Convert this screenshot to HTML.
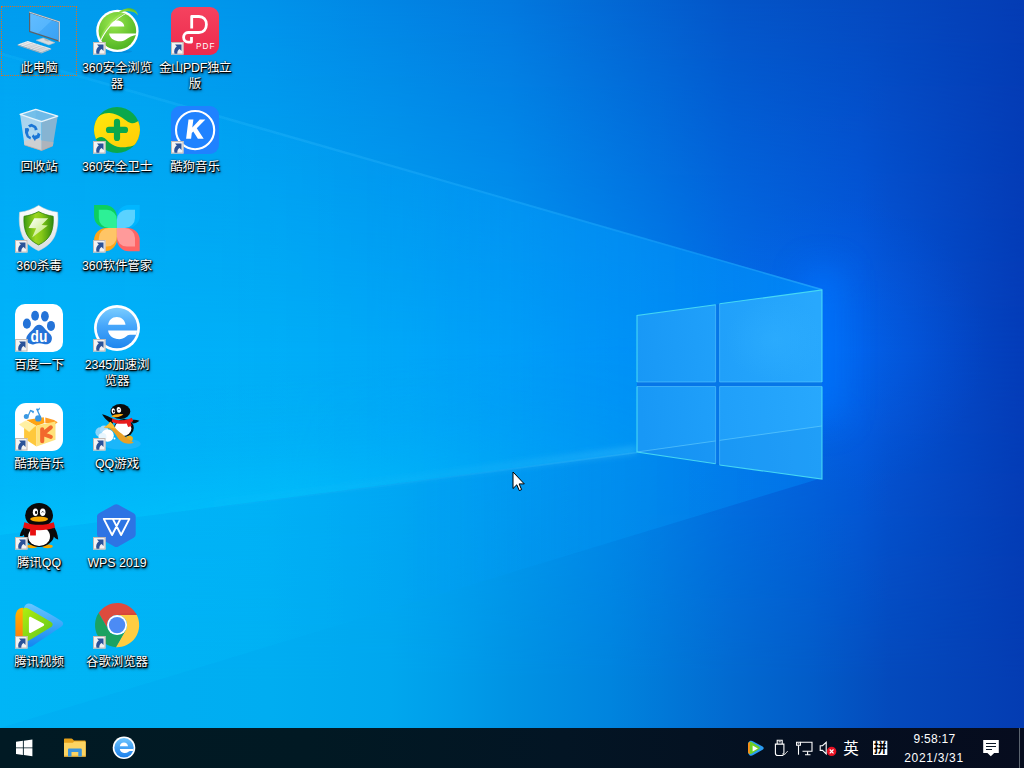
<!DOCTYPE html>
<html lang="zh-CN">
<head>
<meta charset="utf-8">
<title>Desktop</title>
<style>
html,body{margin:0;padding:0;width:1024px;height:768px;overflow:hidden;background:#0078d7;}
body{position:relative;font-family:"Liberation Sans","Noto Sans CJK SC",sans-serif;}
#bg{position:absolute;left:0;top:0;width:1024px;height:768px;display:block;}
.ico{position:absolute;width:76px;height:90px;}
.ico svg.im{position:absolute;left:14px;top:0;width:48px;height:48px;overflow:visible;}
.ico .lb{position:absolute;left:-4px;top:53px;width:84px;text-align:center;color:#fff;font-size:12.400px;line-height:16px;text-shadow:1px 1px 0 rgba(0,0,0,.55),1px 1px 1px rgba(0,0,0,.95),0 1px 2px rgba(0,0,0,.9),1px 2px 3px rgba(0,0,0,.7),0 0 2px rgba(0,0,0,.6);}
.ico svg.sc{position:absolute;left:14.200px;top:35.300px;width:12.500px;height:12.500px;}
#sel{position:absolute;left:1px;top:6px;width:76px;height:70px;border:1px dotted #e0701c;box-sizing:border-box;}
#tb{position:absolute;left:0;top:728px;width:1024px;height:40px;background:linear-gradient(90deg,#011a24 0%,#011923 30%,#031524 55%,#050f20 80%,#060c1e 100%);}
#tb .t{position:absolute;color:#fff;font-size:12px;white-space:nowrap;}
#tb svg{position:absolute;overflow:visible;}
</style>
</head>
<body>
<svg id="bg" viewBox="0 0 1024 768">
<defs>
<linearGradient id="gt" gradientUnits="userSpaceOnUse" x1="0" y1="0" x2="1024" y2="0"><stop offset="0.0000" stop-color="rgb(0,156,238)"/><stop offset="0.1514" stop-color="rgb(0,154,236)"/><stop offset="0.2637" stop-color="rgb(0,146,234)"/><stop offset="0.4980" stop-color="rgb(2,120,222)"/><stop offset="0.7129" stop-color="rgb(3,85,200)"/><stop offset="0.8691" stop-color="rgb(4,72,190)"/><stop offset="1.0000" stop-color="rgb(4,60,180)"/></linearGradient>
<linearGradient id="gm" gradientUnits="userSpaceOnUse" x1="0" y1="0" x2="1024" y2="0"><stop offset="0.0000" stop-color="rgb(0,178,250)"/><stop offset="0.2637" stop-color="rgb(0,174,247)"/><stop offset="0.3809" stop-color="rgb(0,168,247)"/><stop offset="0.4980" stop-color="rgb(0,156,246)"/><stop offset="0.6250" stop-color="rgb(0,132,240)"/><stop offset="0.7129" stop-color="rgb(2,112,235)"/><stop offset="0.8398" stop-color="rgb(3,92,228)"/><stop offset="0.8691" stop-color="rgb(4,84,216)"/><stop offset="0.9707" stop-color="rgb(4,65,190)"/><stop offset="1.0000" stop-color="rgb(4,60,185)"/></linearGradient>
<linearGradient id="gbt" gradientUnits="userSpaceOnUse" x1="0" y1="0" x2="1024" y2="0"><stop offset="0.0000" stop-color="rgb(0,176,244)"/><stop offset="0.2637" stop-color="rgb(0,173,241)"/><stop offset="0.3809" stop-color="rgb(0,167,238)"/><stop offset="0.4395" stop-color="rgb(0,158,234)"/><stop offset="0.4980" stop-color="rgb(0,147,228)"/><stop offset="0.5957" stop-color="rgb(0,132,222)"/><stop offset="0.7129" stop-color="rgb(2,106,208)"/><stop offset="0.7910" stop-color="rgb(2,92,200)"/><stop offset="0.8691" stop-color="rgb(4,74,188)"/><stop offset="1.0000" stop-color="rgb(4,60,178)"/></linearGradient>

<linearGradient id="mt" gradientUnits="userSpaceOnUse" x1="0" y1="0" x2="0" y2="350"><stop offset="0" stop-color="#fff"/><stop offset="1" stop-color="#000"/></linearGradient>
<linearGradient id="mb" gradientUnits="userSpaceOnUse" x1="0" y1="350" x2="0" y2="680"><stop offset="0" stop-color="#000"/><stop offset="1" stop-color="#fff"/></linearGradient>
<mask id="mkt" maskUnits="userSpaceOnUse" x="0" y="0" width="1024" height="768"><rect width="1024" height="768" fill="url(#mt)"/></mask>
<mask id="mkb" maskUnits="userSpaceOnUse" x="0" y="0" width="1024" height="768"><rect width="1024" height="768" fill="url(#mb)"/></mask>
<filter id="bl16" x="-150%" y="-50%" width="400%" height="200%"><feGaussianBlur stdDeviation="17"/></filter>
<filter id="bl8" x="-20%" y="-20%" width="140%" height="140%"><feGaussianBlur stdDeviation="8"/></filter>
<filter id="bl3" x="-20%" y="-20%" width="140%" height="140%"><feGaussianBlur stdDeviation="3"/></filter>
<filter id="bl1" x="-20%" y="-20%" width="140%" height="140%"><feGaussianBlur stdDeviation="0.5"/></filter>
<linearGradient id="lnA" gradientUnits="userSpaceOnUse" x1="0" y1="0" x2="822" y2="0"><stop offset="0" stop-color="#40c8ff" stop-opacity="0.080"/><stop offset="0.400" stop-color="#40c0ff" stop-opacity="0.220"/><stop offset="0.850" stop-color="#40c0ff" stop-opacity="0.200"/><stop offset="1" stop-color="#60d8ff" stop-opacity="0.300"/></linearGradient>
<linearGradient id="bmA" gradientUnits="userSpaceOnUse" x1="0" y1="0" x2="822" y2="0"><stop offset="0" stop-color="#00c8ff" stop-opacity="0.12"/><stop offset="0.25" stop-color="#00c0ff" stop-opacity="0.1"/><stop offset="0.45" stop-color="#00a8ff" stop-opacity="0.14"/><stop offset="0.75" stop-color="#00a0ff" stop-opacity="0.46"/><stop offset="1" stop-color="#0098ff" stop-opacity="0.6"/></linearGradient>
<linearGradient id="bmB" gradientUnits="userSpaceOnUse" x1="0" y1="0" x2="822" y2="0"><stop offset="0" stop-color="#00d0ff" stop-opacity="0.16"/><stop offset="0.3" stop-color="#00c8ff" stop-opacity="0.16"/><stop offset="0.5" stop-color="#00a0f6" stop-opacity="0.16"/><stop offset="0.75" stop-color="#0098f6" stop-opacity="0.4"/><stop offset="1" stop-color="#0088fa" stop-opacity="0.45"/></linearGradient>
<linearGradient id="lnB" gradientUnits="userSpaceOnUse" x1="150" y1="0" x2="637" y2="0"><stop offset="0" stop-color="#40c8ff" stop-opacity="0"/><stop offset="0.6" stop-color="#40c8ff" stop-opacity="0.18"/><stop offset="1" stop-color="#50d0ff" stop-opacity="0.5"/></linearGradient>
<linearGradient id="bandA" gradientUnits="userSpaceOnUse" x1="300" y1="496" x2="284.500" y2="377"><stop offset="0" stop-color="#00c8ff" stop-opacity="0.500"/><stop offset="0.500" stop-color="#00c0ff" stop-opacity="0.160"/><stop offset="1" stop-color="#00c0ff" stop-opacity="0"/></linearGradient>
<linearGradient id="mband" gradientUnits="userSpaceOnUse" x1="0" y1="0" x2="640" y2="0"><stop offset="0" stop-color="#fff"/><stop offset="0.450" stop-color="#fff"/><stop offset="0.800" stop-color="#555"/><stop offset="1" stop-color="#222"/></linearGradient>
<mask id="mkband" maskUnits="userSpaceOnUse" x="0" y="0" width="1024" height="768"><rect width="1024" height="768" fill="url(#mband)"/></mask>
<radialGradient id="glow" gradientUnits="userSpaceOnUse" cx="835" cy="345" r="150"><stop offset="0" stop-color="#0078ff" stop-opacity="0.300"/><stop offset="0.500" stop-color="#0070ff" stop-opacity="0.150"/><stop offset="1" stop-color="#0060f0" stop-opacity="0"/></radialGradient>
<linearGradient id="pn" gradientUnits="userSpaceOnUse" x1="637" y1="380" x2="822" y2="360"><stop offset="0" stop-color="#1898f6"/><stop offset="0.450" stop-color="#20a0fa"/><stop offset="1" stop-color="#28a8fd"/></linearGradient>
<radialGradient id="pnhi" cx="0.5" cy="0.5" r="0.5"><stop offset="0" stop-color="#30b0ff" stop-opacity="0.5"/><stop offset="1" stop-color="#30b0ff" stop-opacity="0"/></radialGradient>
<clipPath id="lowp"><polygon points="637,386.5 715.6,386.5 715.6,463.7 637,452"/><polygon points="719.6,386.5 822,386.5 822,479 719.6,465"/></clipPath>
</defs>
<rect width="1024" height="768" fill="url(#gm)"/>
<rect width="1024" height="768" fill="url(#gt)" mask="url(#mkt)"/>
<rect width="1024" height="768" fill="url(#gbt)" mask="url(#mkb)"/>
<!-- beams -->
<circle cx="835" cy="345" r="150" fill="url(#glow)"/>
<rect x="806" y="270" width="34" height="150" fill="#0074ff" filter="url(#bl16)" opacity="0.850"/>
<polygon points="0,535 637,452 720,465 822,478 0,728" fill="url(#bmB)" filter="url(#bl1)"/>
<polygon points="0,52 822,289 822,300 720,330 637,452 0,535" fill="url(#bmA)" filter="url(#bl1)"/>
<polygon points="0,52 822,288.8 822,290.4 0,55" fill="url(#lnA)" filter="url(#bl1)"/>
<polygon points="0,535 637,452 637,330 0,415" fill="url(#bandA)" mask="url(#mkband)"/>
<polygon points="100,514 637,446 637,453.500 100,523" fill="url(#lnB)" filter="url(#bl3)" opacity="0.700"/>
<polygon points="150,515.500 637,451.700 637,453.300 150,517.500" fill="url(#lnB)" filter="url(#bl1)" opacity="0.550"/>
<!-- logo panes -->
<g>
<polygon points="637,315.5 822,290 822,479 637,452" fill="#0676e8"/>
<polygon points="637,315.5 715.6,304.7 715.6,382 637,382" fill="url(#pn)"/>
<polygon points="719.6,303.8 822,290 822,382 719.6,382" fill="url(#pn)"/>
<polygon points="637,386.5 715.6,386.5 715.6,463.7 637,452" fill="url(#pn)"/>
<polygon points="719.6,386.5 822,386.5 822,479 719.6,465" fill="url(#pn)"/>
<ellipse cx="775" cy="340" rx="50" ry="40" fill="url(#pnhi)"/>
<g clip-path="url(#lowp)">
<polygon points="637,452 822,426 822,480 637,480" fill="#0070e0" opacity="0.16"/>
<line x1="637" y1="452" x2="822" y2="426" stroke="#7fe0ff" stroke-width="1" opacity="0.45"/>
</g>
<g fill="none" stroke="#4fe4f4" stroke-width="1.1" opacity="0.85">
<polyline points="715.6,304.7 637,315.5 637,382"/>
<polyline points="719.6,303.8 822,290 822,382"/>
<polyline points="637,386.5 637,452 715.6,463.7"/>
<polyline points="719.6,465 822,479 822,386.5"/>
</g>
<g fill="none" stroke="#6fd8ff" stroke-width="0.9" opacity="0.5">
<polyline points="637,382 715.6,382 715.6,304.7"/>
<polyline points="719.6,303.8 719.6,382 822,382"/>
<polyline points="637,386.5 715.6,386.5 715.6,463.7"/>
<polyline points="719.6,465 719.6,386.5 822,386.5"/>
</g>
</g>
</svg>
<div id="sel"></div>
<div class="ico" style="left:1px;top:7px"><svg class="im" viewBox="0 0 48 48"><!--I:pc-->
<defs><linearGradient id="pcs" x1="0" y1="0" x2="1" y2="1"><stop offset="0" stop-color="#62bcff"/><stop offset="0.500" stop-color="#56b6fd"/><stop offset="0.520" stop-color="#44aaf8"/><stop offset="1" stop-color="#3aa2f4"/></linearGradient>
<linearGradient id="pck" x1="0" y1="0" x2="0" y2="1"><stop offset="0" stop-color="#f6f8fa"/><stop offset="1" stop-color="#d2d6da"/></linearGradient></defs>
<path d="M21.200 33.200L28.100 31 39.800 35.700 33.900 37.900z" fill="#d6dcdf" stroke="#b9c0c5" stroke-width="0.600" stroke-linejoin="round"/>
<path d="M29.500 31.500l4 1.400v1.800l-4-1.500z" fill="#b4bac0"/>
<path d="M14 4.400L45 14.400V35L14 25z" fill="#5b6168"/>
<path d="M14 4.400L45 14.400V35l-1.400-.4V15.300L14.500 5.800z" fill="#c8cdd2"/>
<path d="M15.200 6.300L43.600 15.500V33.200L15.200 24z" fill="url(#pcs)"/>
<path d="M2.600 37.600L12.800 33.900 36.100 41.600 26.300 45.600z" fill="url(#pck)"/>
<path d="M2.600 37.600L26.300 45.600v.8L2.600 38.400z" fill="#a9aeb4"/>
<path d="M26.300 45.600L36.100 41.600v.8L26.300 46.400z" fill="#b9bec4"/>
<g stroke="#b8bdc3" stroke-width="0.500" fill="none"><path d="M5.200 36.700l23.500 8M7.700 35.800l23.500 7.900M10.300 34.800l23.400 7.900"/><path d="M8.500 39.600l10.200-3.800M12.500 41l10.200-3.900M16.500 42.300l10.100-3.900M20.500 43.700l10.100-3.900"/></g>
<!--/I:pc--></svg><div class="lb">此电脑</div></div>
<div class="ico" style="left:79px;top:7px"><svg class="im" viewBox="0 0 48 48"><!--I:b360-->
<defs><radialGradient id="g3b" cx="0.400" cy="0.300" r="0.800"><stop offset="0" stop-color="#9be650"/><stop offset="0.550" stop-color="#6cc832"/><stop offset="1" stop-color="#48ae1e"/></radialGradient>
<linearGradient id="g3s" x1="1" y1="0" x2="0" y2="1"><stop offset="0" stop-color="#3aa822"/><stop offset="0.400" stop-color="#7ed43c"/><stop offset="1" stop-color="#8edc4c"/></linearGradient>
<clipPath id="c3b"><circle cx="24.400" cy="23.900" r="18.800"/></clipPath></defs>
<ellipse cx="25" cy="44.500" rx="14" ry="1.600" fill="#0a70c0" opacity="0.350"/>
<circle cx="24.400" cy="23.900" r="21.200" fill="#fff"/>
<circle cx="24.400" cy="23.900" r="18.800" fill="url(#g3b)"/>
<g clip-path="url(#c3b)">
<path d="M16.700 19.600c.4-3.600 3.400-6 7.300-6s6.900 2.400 7.300 6z" fill="#fff"/>
<path d="M16.100 26.500H44v1.200c-4.500.6-8 2.600-11.500 5-2.300 1.300-4.700 1.900-7.600 1.500-4.700-.6-8.200-3.600-8.800-7.700z" fill="#fff"/>
<path d="M36 2.500C28 5 20 11 14.500 18 10.500 23 8 28 6.800 32.500l1.200.6C10 28 13 23 17 18.500 22.500 12 29 7 36.500 4.200z" fill="#a8ec5c" opacity="0.550"/>
<path d="M35.800 5.600C29 8.500 22.500 13.500 17.200 19.700 13.500 24 10.500 28.800 8.300 33.600l-.8-.5C9.700 28 12.800 23.300 16.500 19 21.800 12.800 28.500 8 35.200 4.900z" fill="#fff"/>
</g>
<path d="M45 8.600C44 2.600 38.500.300 32.800 1.700 29.300 2.600 25.800 4.600 22.600 7.200c3.600-1.700 7.500-2.700 11.200-2.900 5-.3 9.400 1 11.200 4.300z" fill="url(#g3s)"/>
<!--/I:b360--></svg><svg class="sc" viewBox="0 0 12.500 12.500"><rect x="0" y="0" width="12.500" height="12.500" fill="#f3f3f3"/><rect x="0.500" y="0.500" width="11.500" height="11.500" fill="none" stroke="#c4bab4" stroke-width="1"/><path d="M4 2.600H10.500V9L8.600 7.100C7 8 6.300 9.500 6.300 11.800H3.500C2.600 8.500 3.600 5.900 5.800 4.400z" fill="#2a5298"/></svg><div class="lb">360安全浏览<br>器</div></div>
<div class="ico" style="left:157px;top:7px"><svg class="im" viewBox="0 0 48 48"><!--I:pdf-->
<defs><linearGradient id="gpdf" x1="0" y1="0" x2="0" y2="1"><stop offset="0" stop-color="#f5425f"/><stop offset="1" stop-color="#ec2a4c"/></linearGradient></defs>
<rect x="0" y="0" width="48" height="48" rx="9" ry="9" fill="url(#gpdf)"/>
<path d="M20.700 21.600V9.500h7.300c4.400 0 7.400 3.400 7.400 8s-3 8-7.400 8H17.100c-2.500 0-4.500 2.100-4.500 4.800s2 4.800 4.500 4.800h3.400v-5.200" fill="none" stroke="#fff" stroke-width="2.800" stroke-linejoin="round"/>
<text x="25" y="41.700" font-family="Liberation Sans, sans-serif" font-size="8.200" fill="#fff" textLength="18.400" lengthAdjust="spacing">PDF</text>
<!--/I:pdf--></svg><svg class="sc" viewBox="0 0 12.500 12.500"><rect x="0" y="0" width="12.500" height="12.500" fill="#f3f3f3"/><rect x="0.500" y="0.500" width="11.500" height="11.500" fill="none" stroke="#c4bab4" stroke-width="1"/><path d="M4 2.600H10.500V9L8.600 7.100C7 8 6.300 9.500 6.300 11.800H3.500C2.600 8.500 3.600 5.900 5.800 4.400z" fill="#2a5298"/></svg><div class="lb"><span style="letter-spacing:-0.3px">金山PDF独立</span><br>版</div></div>
<div class="ico" style="left:1px;top:106px"><svg class="im" viewBox="0 0 48 48"><!--I:bin-->
<defs><linearGradient id="gbl" x1="0" y1="0" x2="0" y2="1"><stop offset="0" stop-color="#a4d2ee"/><stop offset="1" stop-color="#b8dcf0"/></linearGradient></defs>
<path d="M5.100 8.400L20.800 3.300 42.700 10.200 26.600 15.700z" fill="#74bfea"/>
<path d="M20.800 3.300L42.700 10.200 41 18 20.800 12z" fill="#6ab8e6" opacity="0.600"/>
<path d="M5.100 8.400L26.600 15.700V44.500L9.500 39z" fill="url(#gbl)"/>
<path d="M26.600 15.700L42.700 10.200 37.900 39.800 26.600 44.500z" fill="#86b4d2"/>
<path d="M8.800 35.200L20 32.400l6.600 2.200V44.500L9.500 39z" fill="#cfd0d2"/>
<path d="M26.600 34.600l11.900 1.600-.6 3.600L26.600 44.500z" fill="#aeb4bc"/>
<path d="M9.500 39l17.100 5.500 11.300-4.700" fill="none" stroke="#c9a898" stroke-width="0.700"/>
<path d="M5.100 8.400L20.800 3.300 42.700 10.200 26.600 15.700z" fill="none" stroke="#e8f4fb" stroke-width="1.300" stroke-linejoin="round"/>
<g fill="#1a76d6">
<path d="M13 19.200l3.500-1.400 4.500 2.200 1.800 3.400-3 1.200-.6-2.600-2.600-1.200-1.800.8z"/>
<path d="M10 22.300l3.200-.4 1 1.800-1.200 3 .8 3 2.200 1.400-.6 2.400-3.600-2.200-1.800-4.600z"/>
<path d="M16.800 30.600l1.600-2.400 1 1.600 2.600-.8.800-2.400 2.600 1.600-1 3.600-3.800 1.600-.6 1.800z"/>
</g>
<!--/I:bin--></svg><div class="lb">回收站</div></div>
<div class="ico" style="left:79px;top:106px"><svg class="im" viewBox="0 0 48 48"><!--I:safe360-->
<defs><clipPath id="c3s"><circle cx="24" cy="24" r="23"/></clipPath>
<linearGradient id="g3y" x1="0" y1="0" x2="1" y2="1"><stop offset="0" stop-color="#ffe80c"/><stop offset="1" stop-color="#ffcc08"/></linearGradient></defs>
<circle cx="24" cy="24" r="23" fill="#0aa84c"/>
<g clip-path="url(#c3s)">
<path d="M0 16C5 10 10 6.600 16.400 7c5 .3 8.400 2 12.400 4.600 4 2.600 6.600 5.400 10.200 5.600 3 .2 5.500-1.200 9-4.200V32c-2.500 4.500-5 7-8.200 7.800-4 1.200-8.500 1.800-12.400 1.400-4.400-.4-7.500-1.800-10.500-4.200-3-2.400-5-5.800-8.500-6-2.800-.1-5.400 1.500-8.400 5z" fill="url(#g3y)"/>
</g>
<path d="M16 23.900h16M24 15.900v16" stroke="#0aa84c" stroke-width="6.200" stroke-linecap="round" fill="none"/>
<!--/I:safe360--></svg><svg class="sc" viewBox="0 0 12.500 12.500"><rect x="0" y="0" width="12.500" height="12.500" fill="#f3f3f3"/><rect x="0.500" y="0.500" width="11.500" height="11.500" fill="none" stroke="#c4bab4" stroke-width="1"/><path d="M4 2.600H10.500V9L8.600 7.100C7 8 6.300 9.500 6.300 11.800H3.500C2.600 8.500 3.600 5.900 5.800 4.400z" fill="#2a5298"/></svg><div class="lb">360安全卫士</div></div>
<div class="ico" style="left:157px;top:106px"><svg class="im" viewBox="0 0 48 48"><!--I:kugou-->
<rect x="0" y="0" width="48" height="48" rx="9" ry="9" fill="#1f82ff"/>
<circle cx="24.100" cy="24.100" r="19.100" fill="none" stroke="#fff" stroke-width="2.100"/>
<path d="M17.500 13.500h4.900l-1.100 8.100 7.500-8.100h5.600l-8.600 8.700 6.900 10.600h-5.800l-4.600-7.400-1.500 1.500-.7 5.900h-5z" fill="#fff"/>
<!--/I:kugou--></svg><svg class="sc" viewBox="0 0 12.500 12.500"><rect x="0" y="0" width="12.500" height="12.500" fill="#f3f3f3"/><rect x="0.500" y="0.500" width="11.500" height="11.500" fill="none" stroke="#c4bab4" stroke-width="1"/><path d="M4 2.600H10.500V9L8.600 7.100C7 8 6.300 9.500 6.300 11.800H3.500C2.600 8.500 3.600 5.900 5.800 4.400z" fill="#2a5298"/></svg><div class="lb">酷狗音乐</div></div>
<div class="ico" style="left:1px;top:205px"><svg class="im" viewBox="0 0 48 48"><!--I:sd360-->
<defs><linearGradient id="gsh" x1="0" y1="0" x2="1" y2="0"><stop offset="0" stop-color="#3c9a0e"/><stop offset="0.400" stop-color="#9cd620"/><stop offset="0.600" stop-color="#86c818"/><stop offset="1" stop-color="#2f8a0c"/></linearGradient>
<linearGradient id="gsw" x1="0" y1="0" x2="0" y2="1"><stop offset="0" stop-color="#ffffff"/><stop offset="1" stop-color="#d8dee2"/></linearGradient>
<linearGradient id="gbo" x1="0" y1="0" x2="1" y2="1"><stop offset="0" stop-color="#ffffff"/><stop offset="1" stop-color="#b8e860"/></linearGradient></defs>
<path d="M23.600.4C18 4 11 6.500 4.600 7.200 3.800 16 4.400 24 7.400 31 10.600 38 16.500 42.500 23.600 45.700 30.700 42.500 36.600 38 39.800 31 42.800 24 43.400 16 42.600 7.200 36.200 6.500 29.200 4 23.600.4z" fill="url(#gsw)" stroke="#e8d8cc" stroke-width="0.500"/>
<path d="M23.600 6.600C19 9 14 10.600 9 11.300 8.600 18 9.300 24 11.600 29 14.200 34.200 18.400 37.400 23.600 39.900 28.800 37.400 33 34.200 35.600 29 37.900 24 38.600 18 38.200 11.300 33.200 10.600 28.200 9 23.600 6.600z" fill="url(#gsh)" stroke="#2a800a" stroke-width="0.800"/>
<path d="M19.300 13.300H33.200L26.600 20 32.800 20.400 17.100 32.500 21.200 23.300 13.500 23z" fill="url(#gbo)"/>
<!--/I:sd360--></svg><svg class="sc" viewBox="0 0 12.500 12.500"><rect x="0" y="0" width="12.500" height="12.500" fill="#f3f3f3"/><rect x="0.500" y="0.500" width="11.500" height="11.500" fill="none" stroke="#c4bab4" stroke-width="1"/><path d="M4 2.600H10.500V9L8.600 7.100C7 8 6.300 9.500 6.300 11.800H3.500C2.600 8.500 3.600 5.900 5.800 4.400z" fill="#2a5298"/></svg><div class="lb">360杀毒</div></div>
<div class="ico" style="left:79px;top:205px"><svg class="im" viewBox="0 0 48 48"><!--I:soft360--><path d="M1.1 0H11.899999999999999A12 12 0 0 1 23.9 12V23.0H13.1A12 12 0 0 1 1.1 11.0V0Z" fill="#0ccf5f"/><path d="M5.8 4.7H13.899999999999999A10 10 0 0 1 23.9 14.7V23.0H15.8A10 10 0 0 1 5.8 13.0V4.7Z" fill="#2df096"/><path d="M35.9 0H46.7V11.0A12 12 0 0 1 34.7 23.0H23.9V12A12 12 0 0 1 35.9 0Z" fill="#00b6ff"/><path d="M33.9 4.7H42V13.0A10 10 0 0 1 32 23.0H23.9V14.7A10 10 0 0 1 33.9 4.7Z" fill="#5ad2ff"/><path d="M13.1 23.0H23.9V34.3A12 12 0 0 1 11.899999999999999 46.3H1.1V35.0A12 12 0 0 1 13.1 23.0Z" fill="#ffa61a"/><path d="M15.8 23.0H23.9V31.6A10 10 0 0 1 13.899999999999999 41.6H5.8V33.0A10 10 0 0 1 15.8 23.0Z" fill="#ffc566"/><path d="M23.9 23.0H34.7A12 12 0 0 1 46.7 35.0V46.3H35.9A12 12 0 0 1 23.9 34.3V23.0Z" fill="#ff6464"/><path d="M23.9 23.0H32A10 10 0 0 1 42 33.0V41.6H33.9A10 10 0 0 1 23.9 31.6V23.0Z" fill="#ff9a9a"/><!--/I:soft360--></svg><svg class="sc" viewBox="0 0 12.500 12.500"><rect x="0" y="0" width="12.500" height="12.500" fill="#f3f3f3"/><rect x="0.500" y="0.500" width="11.500" height="11.500" fill="none" stroke="#c4bab4" stroke-width="1"/><path d="M4 2.600H10.500V9L8.600 7.100C7 8 6.300 9.500 6.300 11.800H3.500C2.600 8.500 3.600 5.900 5.800 4.400z" fill="#2a5298"/></svg><div class="lb">360软件管家</div></div>
<div class="ico" style="left:1px;top:304px"><svg class="im" viewBox="0 0 48 48"><!--I:baidu-->
<rect x="0" y="0" width="48" height="48" rx="10" ry="10" fill="#fff"/>
<g fill="#2473d8">
<ellipse cx="11.900" cy="19.700" rx="4" ry="5.100"/>
<ellipse cx="20.100" cy="11.700" rx="3.900" ry="5"/>
<ellipse cx="29.900" cy="12.200" rx="3.900" ry="5.300"/>
<ellipse cx="36" cy="21.900" rx="4" ry="5"/>
<path d="M24.100 20.700c2.400 0 3.800 1.300 5.200 3.400 1.600 2.400 4.400 4.400 6.200 6.400 1.800 2 1.900 5.200.4 7.400-1.500 2.200-4.300 2.800-7 2.200-1.800-.4-3.200-.8-4.800-.8s-3.200.5-5 .9c-2.800.6-5.600-.2-7-2.600-1.300-2.300-1-5.200.9-7.200 1.800-2 4.400-3.800 6-6.300 1.300-2.100 2.700-3.400 5.100-3.400z"/>
</g>
<text x="15.500" y="37.500" font-family="Liberation Sans, sans-serif" font-weight="bold" font-size="17" fill="#fff" textLength="16.800" lengthAdjust="spacingAndGlyphs">du</text>
<!--/I:baidu--></svg><svg class="sc" viewBox="0 0 12.500 12.500"><rect x="0" y="0" width="12.500" height="12.500" fill="#f3f3f3"/><rect x="0.500" y="0.500" width="11.500" height="11.500" fill="none" stroke="#c4bab4" stroke-width="1"/><path d="M4 2.600H10.500V9L8.600 7.100C7 8 6.300 9.500 6.300 11.800H3.500C2.600 8.500 3.600 5.900 5.800 4.400z" fill="#2a5298"/></svg><div class="lb">百度一下</div></div>
<div class="ico" style="left:79px;top:304px"><svg class="im" viewBox="0 0 48 48"><!--I:b2345-->
<defs><linearGradient id="g23" x1="0" y1="0" x2="0" y2="1"><stop offset="0" stop-color="#7acdff"/><stop offset="0.450" stop-color="#46a6fb"/><stop offset="1" stop-color="#1e86ee"/></linearGradient>
<clipPath id="c23"><circle cx="24" cy="24" r="20.300"/></clipPath></defs>
<circle cx="24" cy="24" r="23" fill="#fff"/>
<circle cx="24" cy="24" r="20.300" fill="url(#g23)"/>
<g clip-path="url(#c23)" fill="#fff">
<path d="M15.100 20.800c.5-4.700 4-7.900 8.700-7.900s8.200 3.200 8.700 7.900z"/>
<path d="M15.100 26.500H46v4.300H37c-1.800 0-2.700.7-4.200 2-2.300 1.900-5.300 2.700-8.800 2.200-4.800-.7-8.400-4-8.900-8.500z"/>
</g>
<!--/I:b2345--></svg><svg class="sc" viewBox="0 0 12.500 12.500"><rect x="0" y="0" width="12.500" height="12.500" fill="#f3f3f3"/><rect x="0.500" y="0.500" width="11.500" height="11.500" fill="none" stroke="#c4bab4" stroke-width="1"/><path d="M4 2.600H10.500V9L8.600 7.100C7 8 6.300 9.500 6.300 11.800H3.500C2.600 8.500 3.600 5.900 5.800 4.400z" fill="#2a5298"/></svg><div class="lb">2345加速浏<br>览器</div></div>
<div class="ico" style="left:1px;top:403px"><svg class="im" viewBox="0 0 48 48"><!--I:kuwo-->
<rect x="0" y="0" width="48" height="48" rx="11" ry="11" fill="#fff"/>
<path d="M11.300 17.100L28.800 14.200 29.500 20 21.500 23z" fill="#ffa414"/>
<path d="M30.300 14.600L39 17.100 42.700 19.300 40.500 21 30.300 20z" fill="#ff9c24"/>
<path d="M9.100 25L21.500 23V43.400L9.100 35.400z" fill="#ffc83c"/>
<path d="M21.500 22.600L40.500 18.600V36.800L21.500 43.400z" fill="#ffe27a"/>
<path d="M4.400 21.500L10.600 17.900 20.800 22.600 14.200 28.800z" fill="#fff0a2" stroke="#ffe890" stroke-width="0.500" stroke-linejoin="round"/>
<path d="M27.200 26.200v12M35.800 24.300l-8 6.500 8 3" fill="none" stroke="#f2682c" stroke-width="4.100" stroke-linecap="round" stroke-linejoin="round"/>
<g fill="#3a98e2" stroke="#3a98e2">
<circle cx="11.300" cy="13.500" r="2.500" stroke="none"/>
<path d="M13.200 12.800L15.500 7.600l3.200 1" fill="none" stroke-width="1.200"/>
<path d="M15.500 7.600l3.600 1-1 1.800z" stroke="none"/>
<circle cx="23.300" cy="15.400" r="3.200" stroke="none"/>
<path d="M25.600 14.400L21.700 5.800" fill="none" stroke-width="1.300"/>
<path d="M21.300 5.600c1.500.6 2.800.2 3.600-1.300.3 1.800-.6 3.400-2.600 3.800z" stroke="none"/>
</g>
<!--/I:kuwo--></svg><svg class="sc" viewBox="0 0 12.500 12.500"><rect x="0" y="0" width="12.500" height="12.500" fill="#f3f3f3"/><rect x="0.500" y="0.500" width="11.500" height="11.500" fill="none" stroke="#c4bab4" stroke-width="1"/><path d="M4 2.600H10.500V9L8.600 7.100C7 8 6.300 9.500 6.300 11.800H3.500C2.600 8.500 3.600 5.900 5.800 4.400z" fill="#2a5298"/></svg><div class="lb">酷我音乐</div></div>
<div class="ico" style="left:79px;top:403px"><svg class="im" viewBox="0 0 48 48"><!--I:qqgame-->
<ellipse cx="28.800" cy="41" rx="19" ry="5.500" fill="#22b6fa" opacity="0.800"/>
<circle cx="7.400" cy="29.200" r="5" fill="#8cd4f8"/>
<circle cx="11" cy="26.500" r="4" fill="#a4dcfa"/>
<circle cx="14.600" cy="32.500" r="6.200" fill="#fff"/>
<circle cx="9.500" cy="34" r="4" fill="#e8f6fe"/>
<circle cx="21.500" cy="35.400" r="1" fill="#fff"/>
<path d="M9.100 11.200c3.500.6 8 2.800 11.800 5.400l-1.600 4.600c-3.500-2-8-6-10.200-10z" fill="#0a0a0a"/>
<path d="M38.600 17c2.600-.4 5.400-.2 7.800.8-1.600 1.600-4.400 2.600-7 2.800z" fill="#0a0a0a"/>
<ellipse cx="31" cy="25" rx="9.800" ry="9" fill="#0a0a0a"/>
<ellipse cx="30" cy="25.400" rx="8.400" ry="7.600" fill="#fff"/>
<ellipse cx="27.400" cy="8.500" rx="9.900" ry="7.400" fill="#0a0a0a"/>
<path d="M19.300 15.500c6 2.600 13 2.400 19.400-.8l1.600 3.400c-1 .6-1.800 1-2.600 1.300l1 3.600-3.600 1-1.400-3.600c-5 1-10.400.4-15-1.700z" fill="#e81c1c"/>
<ellipse cx="20.400" cy="8" rx="1.800" ry="2.800" fill="#fff" transform="rotate(-8 20.400 8)"/>
<ellipse cx="25.900" cy="6.900" rx="2.200" ry="2.900" fill="#fff" transform="rotate(-8 25.900 6.900)"/>
<ellipse cx="20.800" cy="8.200" rx=".800" ry="1.200" fill="#0a0a0a"/>
<path d="M24.800 7.100c.6-.8 1.600-.9 2.300-.3" fill="none" stroke="#0a0a0a" stroke-width=".700"/>
<path d="M18.200 13.200c3-2 8-2.600 12.200-1.900-1.800 1.800-4.400 2.800-7 3-2.200.2-4.200-.2-5.200-1.100z" fill="#f8a810"/>
<path d="M33.600 33.600c2-1.400 4.600-1.200 5.800.4 1 1.400.4 3.200-.8 4.200l-5.400-2.600z" fill="#f0b020"/>
<path d="M10.600 24.400C13 23.500 15.500 21.500 17.100 18.800 19 20 20.600 22.400 21.700 24.200 24 27 26.500 29 28.800 30.800 32 33.500 36 37 40.800 39.800 36.500 41.200 32.500 40.800 29.300 39 25.800 37 24 33.500 21.800 30.500 19.800 27.800 18 26 15.500 25.200 14 24.700 12 24.500 10.600 24.400Z" fill="#e9a026"/>
<path d="M10.600 24.400C13 23.500 15.500 21.500 17.100 18.800 19 20 20.600 22.400 21.700 24.200 22.500 25.200 23.300 26 24 26.800 21 24.600 15 23.600 10.600 24.400Z" fill="#f7c235"/>
<!--/I:qqgame--></svg><svg class="sc" viewBox="0 0 12.500 12.500"><rect x="0" y="0" width="12.500" height="12.500" fill="#f3f3f3"/><rect x="0.500" y="0.500" width="11.500" height="11.500" fill="none" stroke="#c4bab4" stroke-width="1"/><path d="M4 2.600H10.500V9L8.600 7.100C7 8 6.300 9.500 6.300 11.800H3.500C2.600 8.500 3.600 5.900 5.800 4.400z" fill="#2a5298"/></svg><div class="lb">QQ游戏</div></div>
<div class="ico" style="left:1px;top:502px"><svg class="im" viewBox="0 0 48 48"><!--I:qq-->
<ellipse cx="17.100" cy="44.300" rx="5.200" ry="1.900" fill="#f8a800"/>
<ellipse cx="32.600" cy="44.300" rx="5.200" ry="1.900" fill="#f8a800"/>
<path d="M10 24c-2.600 2.600-4.600 6-5.200 10 1.600.4 3.400-.4 4.600-1.800z" fill="#0a0a0a"/>
<path d="M38.200 24c2.600 3 4.600 8 5 13.600-2-.6-3.800-2.200-5-4.200z" fill="#0a0a0a"/>
<ellipse cx="24.100" cy="31.700" rx="15.200" ry="13.200" fill="#0a0a0a"/>
<ellipse cx="24.100" cy="13.200" rx="13.900" ry="12.100" fill="#0a0a0a"/>
<ellipse cx="24.100" cy="34.400" rx="10.900" ry="9.700" fill="#fff"/>
<path d="M9.400 20.200c9 3.400 20.400 3.400 29.400 0l1.200 5.400c-9.600 3.600-22.200 3.600-31.800 0z" fill="#e81010"/>
<path d="M15.100 26.500h5.800v7.100h-5.800z" fill="#e81010"/>
<ellipse cx="20.400" cy="10.300" rx="2.600" ry="3.700" fill="#fff"/>
<ellipse cx="27.700" cy="10.300" rx="2.800" ry="3.700" fill="#fff"/>
<ellipse cx="21.100" cy="10.400" rx="1.100" ry="1.600" fill="#0a0a0a"/>
<path d="M26.600 10.400c.5-1 1.800-1 2.300 0" fill="none" stroke="#0a0a0a" stroke-width=".800"/>
<ellipse cx="24.100" cy="17.100" rx="8.900" ry="2.600" fill="#f8a800"/>
<!--/I:qq--></svg><svg class="sc" viewBox="0 0 12.500 12.500"><rect x="0" y="0" width="12.500" height="12.500" fill="#f3f3f3"/><rect x="0.500" y="0.500" width="11.500" height="11.500" fill="none" stroke="#c4bab4" stroke-width="1"/><path d="M4 2.600H10.500V9L8.600 7.100C7 8 6.300 9.500 6.300 11.800H3.500C2.600 8.500 3.600 5.900 5.800 4.400z" fill="#2a5298"/></svg><div class="lb">腾讯QQ</div></div>
<div class="ico" style="left:79px;top:502px"><svg class="im" viewBox="0 0 48 48"><!--I:wps-->
<path d="M21.300 2.700c1.300-.7 2.700-.7 4 0l15.400 8.600c1.300.7 2 2 2 3.400v17.600c0 1.400-.7 2.700-2 3.400L25.300 44.400c-1.300.7-2.700.7-4 0L6 35.700c-1.300-.7-2-2-2-3.400V14.700c0-1.400.7-2.700 2-3.400z" fill="#2d74e4"/>
<path d="M10.800 16.900h16.600L19.100 33zM19.800 16.900h16.600L28.100 33z" fill="none" stroke="#fff" stroke-width="1.900" stroke-linejoin="round"/>
<!--/I:wps--></svg><svg class="sc" viewBox="0 0 12.500 12.500"><rect x="0" y="0" width="12.500" height="12.500" fill="#f3f3f3"/><rect x="0.500" y="0.500" width="11.500" height="11.500" fill="none" stroke="#c4bab4" stroke-width="1"/><path d="M4 2.600H10.500V9L8.600 7.100C7 8 6.300 9.500 6.300 11.800H3.500C2.600 8.500 3.600 5.900 5.800 4.400z" fill="#2a5298"/></svg><div class="lb">WPS 2019</div></div>
<div class="ico" style="left:1px;top:601px"><svg class="im" viewBox="0 0 48 48"><!--I:txv-->
<defs><linearGradient id="gtb" x1="0" y1="0" x2="0" y2="1"><stop offset="0" stop-color="#6ac6ff"/><stop offset="0.500" stop-color="#3aa6fa"/><stop offset="1" stop-color="#1486f0"/></linearGradient>
<linearGradient id="gtg" x1="0" y1="0" x2="1" y2="1"><stop offset="0" stop-color="#b0ee10"/><stop offset="1" stop-color="#5cc41c"/></linearGradient>
<linearGradient id="gto" x1="0" y1="0" x2="0" y2="1"><stop offset="0" stop-color="#ffb600"/><stop offset="1" stop-color="#ff7810"/></linearGradient></defs>
<path d="M9.100 6.500c1-3.400 4-5 7.400-3.400C27 8.500 38 14.500 46.500 20c2.200 1.600 2.200 4 0 5.400C38 31 27 38.500 17.500 45c-3 2-6 1-7.600-2z" fill="url(#gtb)"/>
<path d="M0.400 16c0-5 2.500-9 7.300-9.200h.8V41H.4z" fill="url(#gto)"/>
<path d="M7.700 10.500c0-3.200 2-4.600 5-3.200l23 13.400c2.600 1.600 2.600 4 0 5.600L14 39.600c-3 1.800-6.300.4-6.300-3z" fill="url(#gtg)"/>
<path d="M13.900 17.300c0-1.300 1-1.900 2.100-1.300l12.300 6.500c1.200.7 1.200 1.800 0 2.500L16 31.700c-1.100.6-2.100 0-2.100-1.300z" fill="#fff"/>
<!--/I:txv--></svg><svg class="sc" viewBox="0 0 12.500 12.500"><rect x="0" y="0" width="12.500" height="12.500" fill="#f3f3f3"/><rect x="0.500" y="0.500" width="11.500" height="11.500" fill="none" stroke="#c4bab4" stroke-width="1"/><path d="M4 2.600H10.500V9L8.600 7.100C7 8 6.300 9.500 6.300 11.800H3.500C2.600 8.500 3.600 5.900 5.800 4.400z" fill="#2a5298"/></svg><div class="lb">腾讯视频</div></div>
<div class="ico" style="left:79px;top:601px"><svg class="im" viewBox="0 0 48 48"><!--I:chrome-->
<path d="M5.590 12.040A22.100 22.100 0 0 1 43.800 14.100H24.100A10 10 0 0 0 15.440 29.100z" fill="#dd4b3e"/>
<path d="M43.800 14.100A22.100 22.100 0 0 1 22.900 46.160L32.760 29.100A10 10 0 0 0 24.100 14.100z" fill="#ffcd42"/>
<path d="M22.900 46.160A22.100 22.100 0 0 1 5.590 12.040L15.440 29.100A10 10 0 0 0 32.760 29.100z" fill="#1ba261"/>
<path d="M24.100 14.100H43.800l-1-1.800H30z" fill="#c8402e" opacity="0.350"/>
<circle cx="24.100" cy="24.100" r="10" fill="#fff"/>
<circle cx="24.100" cy="24.100" r="8.200" fill="#4c8bf5"/>
<!--/I:chrome--></svg><svg class="sc" viewBox="0 0 12.500 12.500"><rect x="0" y="0" width="12.500" height="12.500" fill="#f3f3f3"/><rect x="0.500" y="0.500" width="11.500" height="11.500" fill="none" stroke="#c4bab4" stroke-width="1"/><path d="M4 2.600H10.500V9L8.600 7.100C7 8 6.300 9.500 6.300 11.800H3.500C2.600 8.500 3.600 5.900 5.800 4.400z" fill="#2a5298"/></svg><div class="lb">谷歌浏览器</div></div>
<div id="tb">
<svg style="left:0;top:0" width="1024" height="40" viewBox="0 0 1024 40">
<!-- start -->
<path d="M16 13.800l6.900-1v6.600H16zM23.800 12.700l8.600-1.200v7.900h-8.600zM16 20.300h6.900v6.600l-6.900-1zM23.800 20.300h8.600v7.900l-8.600-1.200z" fill="#fff"/>
<!-- explorer -->
<g>
<path d="M64 11.600c0-.6.400-1 1-1h6.400c.5 0 .8.200 1.100.5l1.400 1.500H84.800c.5 0 .9.400.9 1V28.600H64z" fill="#e5a01a"/>
<path d="M64 14.800h8.300c.4 0 .7-.1.900-.4l.8-1h10.900c.4 0 .8.400.8.900V28.600H64z" fill="#fcd462"/>
<path d="M64 27.700h21.700v.9H64z" fill="#e2a52a"/>
<path d="M68 28.600v-6.800c0-.7.500-1.200 1.200-1.200h11.400c.7 0 1.200.5 1.200 1.200v6.800h-3.500v-4.700h-6.800v4.700z" fill="#3b94dc"/>
</g>
<!-- browser e -->
<g transform="translate(112.700 8.500) scale(0.4710)">
<circle cx="24" cy="24" r="24" fill="#fff"/>
<circle cx="24" cy="24" r="20.600" fill="url(#tbe)"/>
<g clip-path="url(#tbc)" fill="#fff">
<path d="M15.100 20.800c.5-4.700 4-7.900 8.700-7.900s8.200 3.200 8.700 7.900z"/>
<path d="M15.100 26.500H46v4.300H37c-1.800 0-2.700.7-4.200 2-2.300 1.900-5.300 2.700-8.800 2.200-4.800-.7-8.400-4-8.900-8.500z"/>
</g>
</g>
<defs><clipPath id="tbc"><circle cx="24" cy="24" r="20.600"/></clipPath><linearGradient id="tbe" x1="0" y1="0" x2="0" y2="1"><stop offset="0" stop-color="#6cc4ff"/><stop offset="1" stop-color="#1c80ea"/></linearGradient>
<linearGradient id="tv1" x1="0" y1="0" x2="1" y2="0"><stop offset="0" stop-color="#ff9a1a"/><stop offset="0.35" stop-color="#7fd41e"/><stop offset="1" stop-color="#22a0f0"/></linearGradient></defs>
<!-- tencent video tray -->
<g>
<path d="M749.5 13.2c1.100-.8 2.600-.5 3.800.2l9.300 5.200c1.500.9 1.500 2.400 0 3.200l-9.300 5.300c-1.300.7-2.800.9-3.800.1-1.100-.9-1.500-2.200-1.500-3.600v-6.800c0-1.400.4-2.800 1.500-3.600z" fill="#2a9cf2"/>
<path d="M748 16.800c0-2.200 1.400-3.600 3-3 .3.100.6.300.9.400l7 4.200c1.300.8 1.300 2 0 2.800l-7 4.200c-2 1.200-3.900.2-3.900-2.200z" fill="#6fd024"/>
<path d="M748 16.800c0-1.800.9-3 2.100-3.100-.4 2.500-.4 9.200 0 12.400-1.200-.2-2.100-1.200-2.100-2.900z" fill="#ff8c1a"/>
<path d="M752.600 17.400l5.300 3.100-5.300 3.100z" fill="#fff"/>
</g>
<!-- usb -->
<g fill="none" stroke="#fff" stroke-width="1.1">
<path d="M777.200 16v-3.700h5v3.700"/>
<path d="M775.400 16.100h8.500v8.800c0 1.600-1 2.600-2.400 2.600h-3.700c-1.400 0-2.400-1-2.400-2.600z"/>
<path d="M778.600 13.800h2.200" stroke-width="1"/>
<path d="M782.600 25.200l1.600 1.800 3.600-4" stroke="#c8c8c8" stroke-width="1"/>
</g>
<!-- network -->
<g fill="none" stroke="#fff" stroke-width="1.100">
<path d="M800.500 14.300h11.500v9h-9.500"/>
<path d="M805 26.700h5.500M807.600 23.500v3"/>
<path d="M796.600 14.300h3.800v3h-3.800z"/>
<path d="M798.500 17.400v9.300"/>
<path d="M797.800 15.800h1.400" stroke-width="0.9"/>
</g>
<!-- volume -->
<g>
<path d="M820.200 17.700h2.300l3.700-3.400v11.600l-3.700-3.500h-2.300z" fill="none" stroke="#fff" stroke-width="1.100" stroke-linejoin="miter"/>
<circle cx="831.600" cy="23.400" r="4.700" fill="#e81123"/>
<path d="M829.700 21.500l3.800 3.800M833.500 21.500l-3.800 3.800" stroke="#fff" stroke-width="1.200"/>
</g>
<!-- IME box -->
<rect x="873" y="12.800" width="14.300" height="14.200" fill="#fff"/>
<!-- notification -->
<g>
<path d="M983.200 12h15.600v13h-4.600l-3.400 3.300-3.400-3.300h-4.200z" fill="#fff"/>
<path d="M986 15.500h10M986 18.500h10M986 21.500h6" stroke="#0a1626" stroke-width="1.200"/>
</g>
<rect x="1019" y="0" width="1" height="40" fill="#5c6570"/>
</svg>
<div class="t" style="left:842px;top:11px;width:18px;font-size:15.500px;line-height:20px;text-align:center;">英</div>
<div class="t" style="left:873px;top:10px;width:14.300px;font-size:13px;line-height:20px;text-align:center;color:#000;font-weight:700">拼</div>
<div class="t" style="left:894.500px;top:3px;width:80px;text-align:center;line-height:16px;letter-spacing:0.300px;">9:58:17</div>
<div class="t" style="left:894px;top:22px;width:80px;text-align:center;line-height:16px;letter-spacing:0.700px;">2021/3/31</div>
</div>
<!-- cursor -->
<svg style="position:absolute;left:512px;top:471px" width="14" height="21" viewBox="0 0 14 21"><path d="M1 1v16.500l3.800-3.700 2.500 5.800 2.300-1-2.500-5.700h5.200z" fill="#fff" stroke="#000" stroke-width="1" stroke-linejoin="miter"/></svg>

</body>
</html>
